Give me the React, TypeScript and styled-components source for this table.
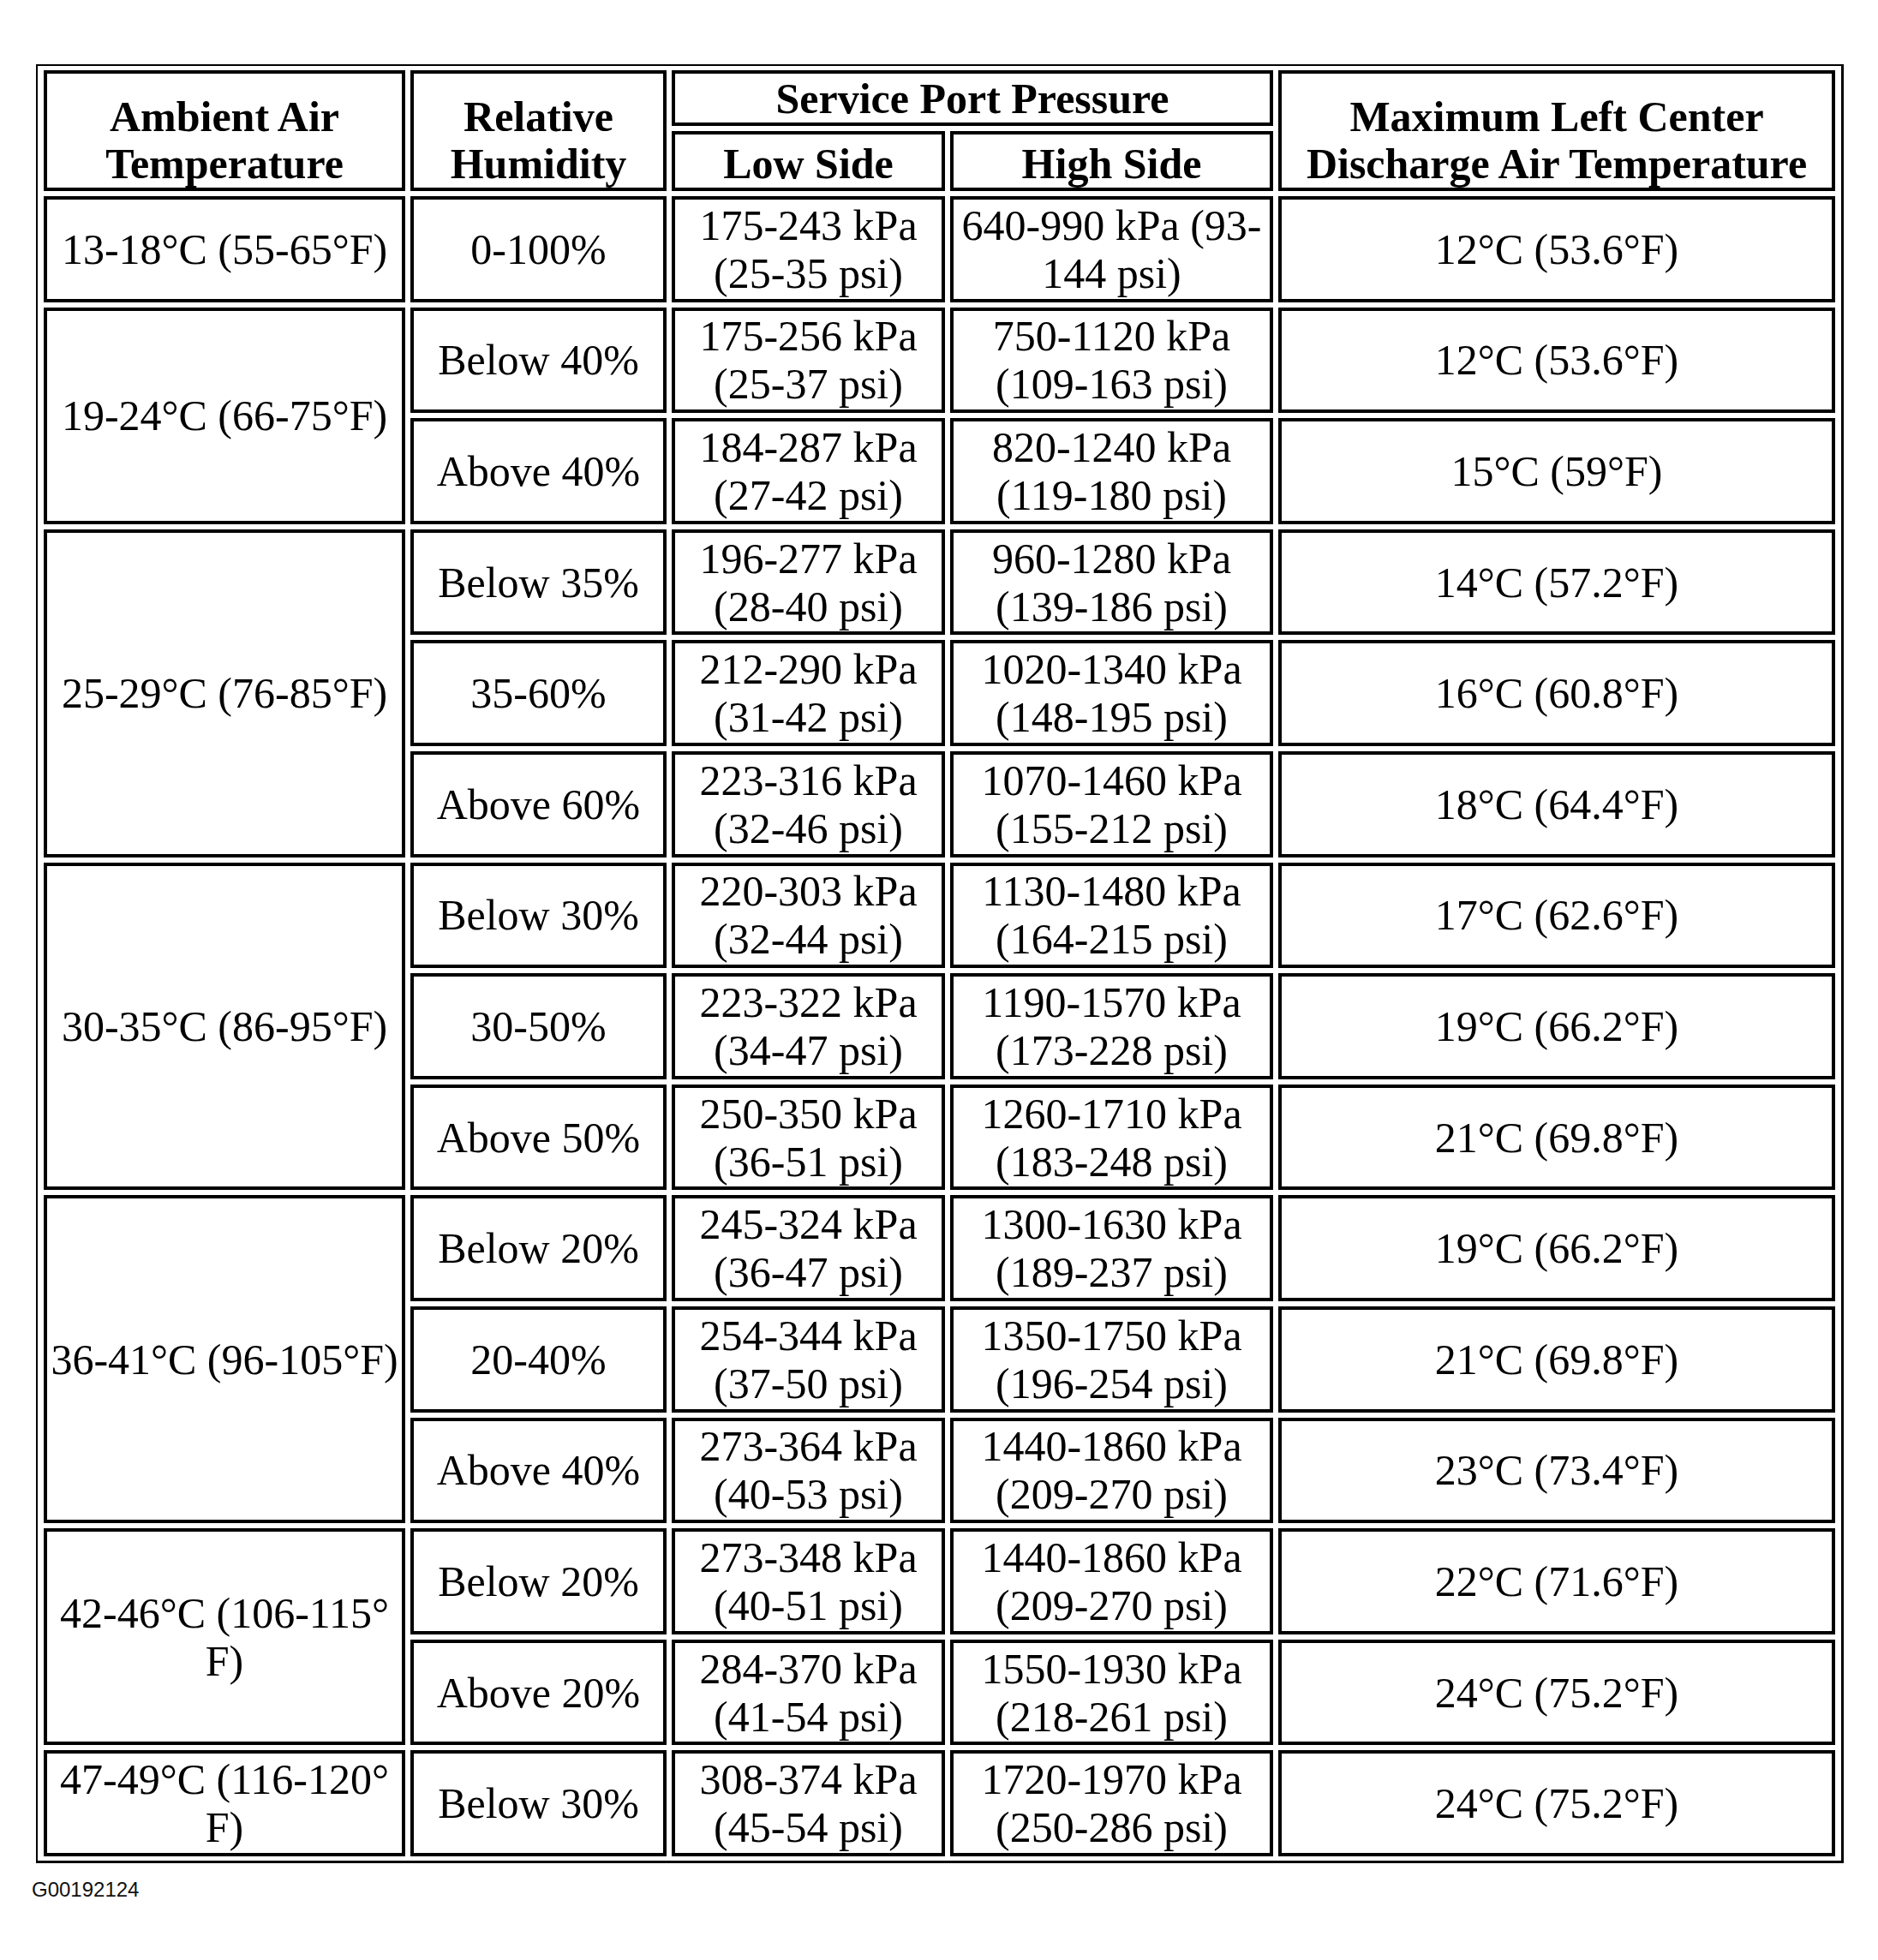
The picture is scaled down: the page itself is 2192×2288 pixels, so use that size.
import React from "react";
import styled, { createGlobalStyle } from "styled-components";

const GlobalStyle = createGlobalStyle`
  html, body {
    margin: 0;
    padding: 0;
    background: #ffffff;
  }
`;

type Group = {
  temp: string;
  rows: [string, string, string, string][];
};

const groups: Group[] = [
  {
    temp: "13-18°C (55-65°F)",
    rows: [["0-100%", "175-243 kPa\n(25-35 psi)", "640-990 kPa (93-\n144 psi)", "12°C (53.6°F)"]],
  },
  {
    temp: "19-24°C (66-75°F)",
    rows: [
      ["Below 40%", "175-256 kPa\n(25-37 psi)", "750-1120 kPa\n(109-163 psi)", "12°C (53.6°F)"],
      ["Above 40%", "184-287 kPa\n(27-42 psi)", "820-1240 kPa\n(119-180 psi)", "15°C (59°F)"],
    ],
  },
  {
    temp: "25-29°C (76-85°F)",
    rows: [
      ["Below 35%", "196-277 kPa\n(28-40 psi)", "960-1280 kPa\n(139-186 psi)", "14°C (57.2°F)"],
      ["35-60%", "212-290 kPa\n(31-42 psi)", "1020-1340 kPa\n(148-195 psi)", "16°C (60.8°F)"],
      ["Above 60%", "223-316 kPa\n(32-46 psi)", "1070-1460 kPa\n(155-212 psi)", "18°C (64.4°F)"],
    ],
  },
  {
    temp: "30-35°C (86-95°F)",
    rows: [
      ["Below 30%", "220-303 kPa\n(32-44 psi)", "1130-1480 kPa\n(164-215 psi)", "17°C (62.6°F)"],
      ["30-50%", "223-322 kPa\n(34-47 psi)", "1190-1570 kPa\n(173-228 psi)", "19°C (66.2°F)"],
      ["Above 50%", "250-350 kPa\n(36-51 psi)", "1260-1710 kPa\n(183-248 psi)", "21°C (69.8°F)"],
    ],
  },
  {
    temp: "36-41°C (96-105°F)",
    rows: [
      ["Below 20%", "245-324 kPa\n(36-47 psi)", "1300-1630 kPa\n(189-237 psi)", "19°C (66.2°F)"],
      ["20-40%", "254-344 kPa\n(37-50 psi)", "1350-1750 kPa\n(196-254 psi)", "21°C (69.8°F)"],
      ["Above 40%", "273-364 kPa\n(40-53 psi)", "1440-1860 kPa\n(209-270 psi)", "23°C (73.4°F)"],
    ],
  },
  {
    temp: "42-46°C (106-115°\nF)",
    rows: [
      ["Below 20%", "273-348 kPa\n(40-51 psi)", "1440-1860 kPa\n(209-270 psi)", "22°C (71.6°F)"],
      ["Above 20%", "284-370 kPa\n(41-54 psi)", "1550-1930 kPa\n(218-261 psi)", "24°C (75.2°F)"],
    ],
  },
  {
    temp: "47-49°C (116-120°\nF)",
    rows: [["Below 30%", "308-374 kPa\n(45-54 psi)", "1720-1970 kPa\n(250-286 psi)", "24°C (75.2°F)"]],
  },
];

const Page = styled.div`
  padding: 75px 0 0 42px;
`;

const Sheet = styled.div`
  display: grid;
  grid-template-columns: 422px 299px 319px 377px 650px;
  grid-template-rows: 65px 70px repeat(15, 123.6px);
  gap: 6px;
  width: max-content;
  padding: 5px 7px;
  border-style: solid;
  border-color: #000;
  border-width: 2px 3px 3px 2px;
  background: #fff;
`;

const Cell = styled.div<{ $rows?: number; $cols?: number }>`
  grid-row: span ${(p) => p.$rows ?? 1};
  grid-column: span ${(p) => p.$cols ?? 1};
  display: flex;
  align-items: center;
  justify-content: center;
  border: 4px solid #000;
  font-family: "Liberation Serif", "Times New Roman", serif;
  font-size: 50px;
  font-weight: 400;
  line-height: 56px;
  color: #000;
  text-align: center;
  white-space: pre;
`;

const HeadCell = styled(Cell)`
  align-items: flex-end;
  font-weight: 700;
  line-height: 55px;
`;

const Caption = styled.div`
  margin-top: 17px;
  margin-left: -5px;
  font-family: "Liberation Sans", Arial, sans-serif;
  font-size: 24px;
  line-height: 28px;
  color: #111;
`;

export default function App() {
  return (
    <>
      <GlobalStyle />
      <Page>
        <Sheet>
          <HeadCell $rows={2}>{"Ambient Air\nTemperature"}</HeadCell>
          <HeadCell $rows={2}>{"Relative\nHumidity"}</HeadCell>
          <HeadCell $cols={2}>Service Port Pressure</HeadCell>
          <HeadCell $rows={2}>{"Maximum Left Center\nDischarge Air Temperature"}</HeadCell>
          <HeadCell>Low Side</HeadCell>
          <HeadCell>High Side</HeadCell>
          {groups.map((g) =>
            g.rows.map((r, i) => (
              <React.Fragment key={g.temp + i}>
                {i === 0 && <Cell $rows={g.rows.length}>{g.temp}</Cell>}
                {r.map((v, j) => (
                  <Cell key={j}>{v}</Cell>
                ))}
              </React.Fragment>
            ))
          )}
        </Sheet>
        <Caption>G00192124</Caption>
      </Page>
    </>
  );
}
